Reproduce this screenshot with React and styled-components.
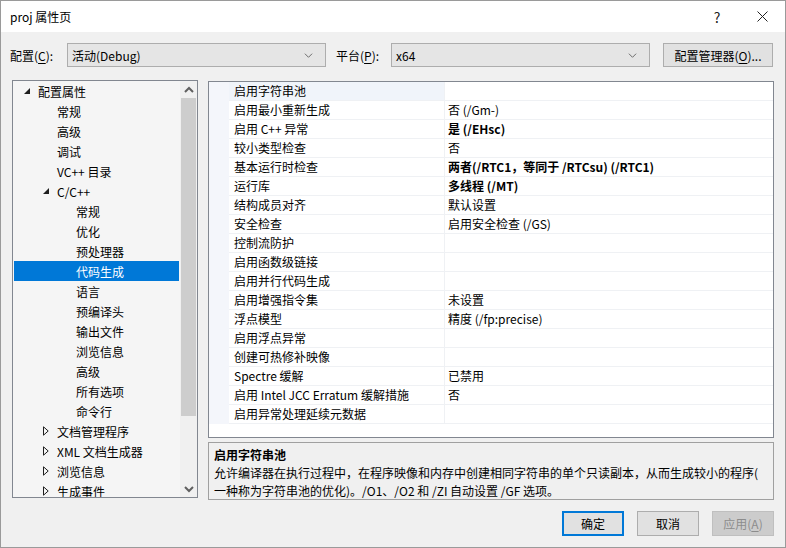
import styled, { createGlobalStyle } from "styled-components";

const GlobalStyle = createGlobalStyle`
  html, body {
    margin: 0;
    padding: 0;
    background: #f0f0f0;
  }
  body {
    font-family: "Microsoft YaHei UI", "Noto Sans CJK SC", sans-serif;
    font-size: 12px;
    color: #000;
  }
  * {
    box-sizing: border-box;
  }
`;

const Window = styled.div`
  width: 786px;
  height: 548px;
  border: 1px solid #9a9a9a;
  background: #f0f0f0;
  display: flex;
  flex-direction: column;
  overflow: hidden;
`;

const TitleBar = styled.div`
  height: 31px;
  background: #fff;
  display: flex;
  align-items: center;
  padding-left: 9px;
  flex-shrink: 0;

  .title {
    flex: 1;
    font-size: 12px;
  }
`;

const TitleButton = styled.div`
  width: ${({ wide }) => (wide ? "46px" : "44px")};
  height: 31px;
  display: flex;
  align-items: center;
  justify-content: center;
  font-size: 14px;
  color: #222;
`;

const Body = styled.div`
  flex: 1;
  display: flex;
  flex-direction: column;
  padding: 11px 11px 0 11px;
`;

const ConfigRow = styled.div`
  display: flex;
  align-items: center;
  height: 24px;
  margin-left: -2px;
`;

const Label = styled.span`
  width: ${({ width }) => width}px;
  margin-left: ${({ left }) => left || 0}px;
  white-space: nowrap;
  flex-shrink: 0;

  u {
    text-decoration: underline;
    text-underline-offset: 2px;
  }
`;

const Combo = styled.div`
  width: ${({ width }) => width}px;
  height: 24px;
  background: #e5e5e5;
  border: 1px solid #adadad;
  display: flex;
  align-items: center;
  justify-content: space-between;
  padding: 0 12px 0 4px;
  flex-shrink: 0;
`;

const Button = styled.div`
  width: ${({ width }) => width || 62}px;
  height: ${({ height }) => height || 25}px;
  margin-left: ${({ left }) => left || 0}px;
  background: ${({ disabled }) => (disabled ? "#cccccc" : "#e1e1e1")};
  color: ${({ disabled }) => (disabled ? "#8c8c8c" : "#000")};
  border: ${({ primary, disabled }) =>
    primary ? "2px solid #0078d7" : disabled ? "1px solid #bfbfbf" : "1px solid #adadad"};
  display: flex;
  align-items: center;
  justify-content: center;
  white-space: nowrap;
  flex-shrink: 0;

  u {
    text-decoration: underline;
    text-underline-offset: 2px;
  }
`;

const Main = styled.div`
  display: flex;
  margin-top: 13px;
  gap: 10px;
`;

const Tree = styled.div`
  width: 186px;
  height: 418px;
  border: 1px solid #828790;
  background: #f5f5f5;
  display: flex;
  overflow: hidden;
`;

const TreeList = styled.div`
  flex: 1;
  padding: 0 1px;
  overflow: hidden;
`;

const TreeItem = styled.div`
  height: 20px;
  display: flex;
  align-items: center;
  padding-left: ${({ level }) => 10 + level * 19}px;
  background: ${({ selected }) => (selected ? "#0078d7" : "transparent")};
  color: ${({ selected }) => (selected ? "#fff" : "#000")};
  white-space: nowrap;

  .toggle {
    width: 14px;
    height: 20px;
    display: flex;
    align-items: center;
    justify-content: flex-start;
  }
`;

const Scrollbar = styled.div`
  width: 17px;
  background: #f0f0f0;
  display: flex;
  flex-direction: column;
  align-items: center;

  .arrow {
    height: 17px;
    display: flex;
    align-items: center;
    justify-content: center;
  }

  .track {
    flex: 1;
    width: 100%;
    display: flex;
    justify-content: center;
  }

  .thumb {
    width: 15px;
    height: 318px;
    background: #cdcdcd;
  }
`;

const RightCol = styled.div`
  flex: 1;
  display: flex;
  flex-direction: column;
  margin-top: 1px;
`;

const Grid = styled.div`
  height: 357px;
  border: 1px solid #828790;
  background: #fff;
  overflow: hidden;
`;

const Row = styled.div`
  display: grid;
  grid-template-columns: 20px 216px 1fr;
  height: 19px;
`;

const Margin = styled.div`
  background: #f4f6fb;
`;

const Cell = styled.div`
  border-bottom: 1px solid #eff1f4;
  border-right: ${({ name }) => (name ? "1px solid #eff1f4" : "none")};
  background: ${({ tinted }) => (tinted ? "#f0f4fa" : "#fff")};
  padding-left: ${({ name }) => (name ? 5 : 3)}px;
  font-weight: ${({ bold }) => (bold ? 700 : 400)};
  line-height: 18px;
  white-space: nowrap;
  overflow: hidden;
`;

const Desc = styled.div`
  margin-top: 4px;
  height: 58px;
  border: 1px solid #a0a0a0;
  padding: 3px 5px;
  line-height: 18px;

  h4 {
    margin: 0;
    font-size: 12px;
    font-weight: 700;
  }

  p {
    margin: 0;
  }
`;

const Footer = styled.div`
  display: flex;
  justify-content: flex-end;
  gap: 13px;
  margin-top: 11px;
`;

const Chevron = ({ dir = "down", color = "#606060", w = 9, bold }) => (
  <svg width={w} height={w} viewBox="0 0 10 10">
    <path
      d={dir === "down" ? "M1 3 L5 7 L9 3" : "M1 7 L5 3 L9 7"}
      fill="none"
      stroke={color}
      strokeWidth={bold ? 2 : 1}
    />
  </svg>
);

const Expanded = ({ color = "#1e1e1e" }) => (
  <svg width="6" height="6" viewBox="0 0 6 6">
    <path d="M6 0 L6 6 L0 6 Z" fill={color} />
  </svg>
);

const Collapsed = () => (
  <svg width="6" height="10" viewBox="0 0 6 10">
    <path d="M0.5 0.8 L5.2 5 L0.5 9.2 Z" fill="none" stroke="#1e1e1e" strokeWidth="1" />
  </svg>
);

const treeItems = [
  { label: "配置属性", level: 0, toggle: "open" },
  { label: "常规", level: 1 },
  { label: "高级", level: 1 },
  { label: "调试", level: 1 },
  { label: "VC++ 目录", level: 1 },
  { label: "C/C++", level: 1, toggle: "open" },
  { label: "常规", level: 2 },
  { label: "优化", level: 2 },
  { label: "预处理器", level: 2 },
  { label: "代码生成", level: 2, selected: true },
  { label: "语言", level: 2 },
  { label: "预编译头", level: 2 },
  { label: "输出文件", level: 2 },
  { label: "浏览信息", level: 2 },
  { label: "高级", level: 2 },
  { label: "所有选项", level: 2 },
  { label: "命令行", level: 2 },
  { label: "文档管理程序", level: 1, toggle: "closed" },
  { label: "XML 文档生成器", level: 1, toggle: "closed" },
  { label: "浏览信息", level: 1, toggle: "closed" },
  { label: "生成事件", level: 1, toggle: "closed" },
];

const props = [
  ["启用字符串池", ""],
  ["启用最小重新生成", "否 (/Gm-)"],
  ["启用 C++ 异常", "是 (/EHsc)", true],
  ["较小类型检查", "否"],
  ["基本运行时检查", "两者(/RTC1，等同于 /RTCsu) (/RTC1)", true],
  ["运行库", "多线程 (/MT)", true],
  ["结构成员对齐", "默认设置"],
  ["安全检查", "启用安全检查 (/GS)"],
  ["控制流防护", ""],
  ["启用函数级链接", ""],
  ["启用并行代码生成", ""],
  ["启用增强指令集", "未设置"],
  ["浮点模型", "精度 (/fp:precise)"],
  ["启用浮点异常", ""],
  ["创建可热修补映像", ""],
  ["Spectre 缓解", "已禁用"],
  ["启用 Intel JCC Erratum 缓解措施", "否"],
  ["启用异常处理延续元数据", ""],
];

export default function App() {
  return (
    <>
      <GlobalStyle />
      <Window>
        <TitleBar>
          <span className="title">proj 属性页</span>
          <TitleButton>?</TitleButton>
          <TitleButton wide>
            <svg width="11" height="11" viewBox="0 0 11 11">
              <path d="M0.5 0.5 L10.5 10.5 M10.5 0.5 L0.5 10.5" stroke="#222" strokeWidth="1" />
            </svg>
          </TitleButton>
        </TitleBar>

        <Body>
          <ConfigRow>
            <Label width={57}>
              配置(<u>C</u>):
            </Label>
            <Combo width={259}>
              <span>活动(Debug)</span>
              <Chevron />
            </Combo>
            <Label width={55} left={10}>
              平台(<u>P</u>):
            </Label>
            <Combo width={259}>
              <span>x64</span>
              <Chevron />
            </Combo>
            <Button width={110} height={24} left={13}>
              配置管理器(<u>O</u>)...
            </Button>
          </ConfigRow>

          <Main>
            <Tree>
              <TreeList>
                {treeItems.map((item, i) => (
                  <TreeItem key={i} level={item.level} selected={item.selected}>
                    <span className="toggle">
                      {item.toggle === "open" && <Expanded />}
                      {item.toggle === "closed" && <Collapsed />}
                    </span>
                    {item.label}
                  </TreeItem>
                ))}
              </TreeList>
              <Scrollbar>
                <div className="arrow">
                  <Chevron dir="up" bold w={10} />
                </div>
                <div className="track">
                  <div className="thumb" />
                </div>
                <div className="arrow">
                  <Chevron dir="down" bold w={10} />
                </div>
              </Scrollbar>
            </Tree>

            <RightCol>
              <Grid>
                {props.map(([name, value, bold], i) => (
                  <Row key={i}>
                    <Margin />
                    <Cell name="1" tinted={i === 0}>
                      {name}
                    </Cell>
                    <Cell bold={bold}>{value}</Cell>
                  </Row>
                ))}
              </Grid>
              <Desc>
                <h4>启用字符串池</h4>
                <p>
                  允许编译器在执行过程中，在程序映像和内存中创建相同字符串的单个只读副本，从而生成较小的程序(
                  <br />
                  一种称为字符串池的优化)。/O1、/O2 和 /ZI 自动设置 /GF 选项。
                </p>
              </Desc>
            </RightCol>
          </Main>

          <Footer>
            <Button primary>确定</Button>
            <Button>取消</Button>
            <Button disabled>
              应用(<u>A</u>)
            </Button>
          </Footer>
        </Body>
      </Window>
    </>
  );
}
